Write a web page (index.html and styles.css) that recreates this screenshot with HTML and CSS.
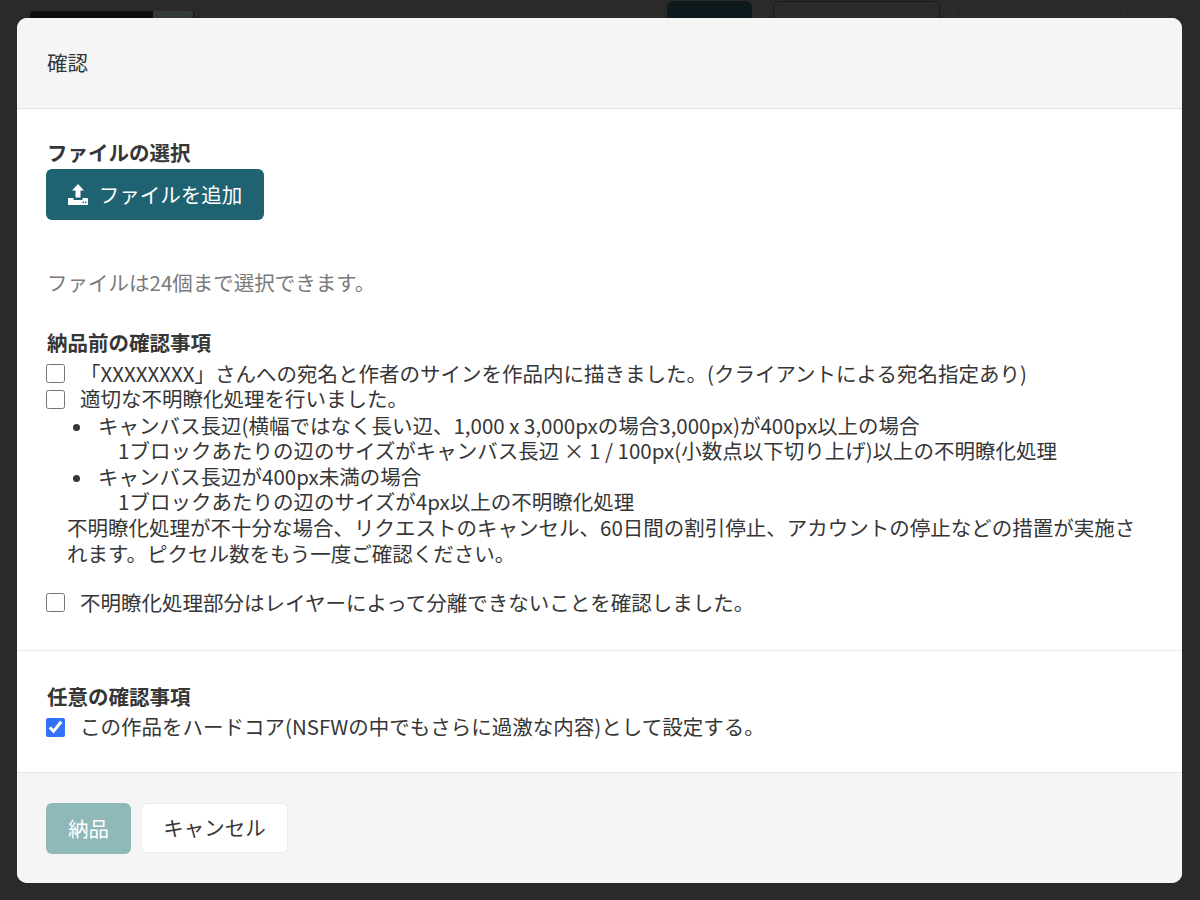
FILE: index.html
```html
<!DOCTYPE html>
<html lang="ja">
<head>
    <meta charset="UTF-8">
    <meta name="viewport" content="width=device-width, initial-scale=1.0">
    <title>確認</title>
    <link rel="stylesheet" href="styles.css">
</head>
<body>

    <!-- page behind the overlay -->
    <div class="backdrop">
        <div class="backdrop-thumb"><div class="backdrop-thumb-img"></div></div>
        <div class="backdrop-actions">
            <div class="backdrop-btn backdrop-btn-primary"></div>
            <div class="backdrop-btn backdrop-btn-outline"></div>
            <div class="backdrop-btn backdrop-btn-faint"></div>
        </div>
    </div>

    <div class="modal">
        <header class="modal-head">確認</header>

        <section class="modal-body">
            <div class="block-files">
                <div class="label">ファイルの選択</div>
                <button class="button button-primary" type="button">
                    <svg class="upload-icon" viewBox="0 0 20 21" width="20" height="21">
                        <path fill="#fff" d="M10 0 L16 6.5 H12.5 V13.5 H7.5 V6.5 H4 Z"/>
                        <path fill="#fff" d="M0 14 H5.5 V15.4 Q5.5 16 6.1 16 H13.9 Q14.5 16 14.5 15.4 V14 H18.8 Q20 14 20 15.2 V21 H0 Z"/>
                        <rect x="14.4" y="17.6" width="1.5" height="1.4" fill="#1f6272"/>
                        <rect x="16.9" y="17.6" width="1.5" height="1.4" fill="#1f6272"/>
                    </svg>
                    <span>ファイルを追加</span>
                </button>
                <p class="help">ファイルは24個まで選択できます。</p>
            </div>

            <div class="block-required">
                <div class="label label-spaced">納品前の確認事項</div>
                <label class="check"><input type="checkbox"><span class="check-text">「XXXXXXXX」さんへの宛名と作者のサインを作品内に描きました。(クライアントによる宛名指定あり)</span></label>
                <label class="check"><input type="checkbox"><span class="check-text">適切な不明瞭化処理を行いました。</span></label>
                <ul class="rules">
                    <li>キャンバス長辺(横幅ではなく長い辺、1,000 x 3,000pxの場合3,000px)が400px以上の場合
                        <div class="rule-detail">1ブロックあたりの辺のサイズがキャンバス長辺 × 1 / 100px(小数点以下切り上げ)以上の不明瞭化処理</div>
                    </li>
                    <li>キャンバス長辺が400px未満の場合
                        <div class="rule-detail">1ブロックあたりの辺のサイズが4px以上の不明瞭化処理</div>
                    </li>
                </ul>
                <p class="warning">不明瞭化処理が不十分な場合、リクエストのキャンセル、60日間の割引停止、アカウントの停止などの措置が実施されます。ピクセル数をもう一度ご確認ください。</p>
                <label class="check"><input type="checkbox"><span class="check-text">不明瞭化処理部分はレイヤーによって分離できないことを確認しました。</span></label>
            </div>

            <div class="block-optional">
                <div class="label label-spaced">任意の確認事項</div>
                <label class="check"><input type="checkbox" checked><span class="check-text">この作品をハードコア(NSFWの中でもさらに過激な内容)として設定する。</span></label>
            </div>
        </section>

        <footer class="modal-foot">
            <button class="button button-disabled" type="button">納品</button>
            <button class="button button-plain" type="button">キャンセル</button>
        </footer>
    </div>

</body>
</html>
```

FILE: styles.css
```css
* {
    margin: 0;
    padding: 0;
    box-sizing: border-box;
}
html, body {
    height: 100%;
}
body {
    background-color: #2b2a2a;
    color: #363636;
    font-family: "Noto Sans CJK JP", "Noto Sans", sans-serif;
    font-size: 20.5px;
    line-height: 25.6px;
    overflow: hidden;
}
.backdrop {
    display: flex;
    justify-content: space-between;
    padding: 1px 30px 0;
    height: 18px;
    overflow: hidden;
}
.backdrop-thumb {
    width: 164px;
    height: 30px;
    margin-top: 10px;
    border-radius: 4px;
    background-color: #0d0d0d;
    overflow: hidden;
}
.backdrop-thumb-img {
    width: 40px;
    height: 30px;
    margin-left: 123px;
    background-color: #333a39;
}
.backdrop-actions {
    display: flex;
    gap: 21px;
    margin-right: 45px;
}
.backdrop-btn {
    height: 40px;
    border-radius: 6px;
}
.backdrop-btn-primary {
    width: 85px;
    background-color: #0e1a1e;
}
.backdrop-btn-outline {
    width: 167px;
    border: 1px solid #141a1c;
}
.backdrop-btn-faint {
    width: 172px;
    margin-left: -8px;
    border: 1px solid #2f2f2f;
}
.modal {
    position: absolute;
    top: 18px;
    left: 17px;
    width: 1165px;
    height: 865px;
    display: flex;
    flex-direction: column;
    background-color: white;
    border-radius: 10px;
    overflow: hidden;
}
.modal-head {
    height: 91px;
    flex-shrink: 0;
    display: flex;
    align-items: center;
    padding: 0 30px;
    background-color: #f5f5f5;
    border-bottom: 1px solid #dfe1e2;
}
.modal-body {
    flex: 1;
    min-height: 0;
}
.label {
    font-weight: 700;
    padding-left: 1px;
}
.label-spaced {
    margin-bottom: 5px;
}
.block-files {
    padding: 31px 29px 0;
}
.button {
    font-family: inherit;
    font-size: 20.5px;
    line-height: 25.6px;
    height: 51px;
    border: 1px solid transparent;
    border-radius: 6px;
    display: inline-flex;
    align-items: center;
    justify-content: center;
}
.button-primary {
    margin-top: 3px;
    width: 218px;
    gap: 11px;
    padding-top: 1px;
    color: white;
    background-color: #1f6272;
}
.upload-icon {
    display: block;
}
.button-disabled {
    width: 85px;
    color: white;
    background-color: #8fb9b9;
}
.button-plain {
    width: 147px;
    height: 50px;
    color: #363636;
    background-color: white;
    border-color: #ececec;
}
.help {
    margin-top: 50px;
    padding-left: 1px;
    color: #7a7a7a;
}
.block-required {
    padding: 35px 30px 34px 29px;
    border-bottom: 1px solid #e3edef;
}
.check {
    display: flex;
    align-items: center;
    min-height: 25.6px;
}
.check input {
    width: 19px;
    height: 19px;
    margin: 0;
    flex-shrink: 0;
    accent-color: #3273f6;
}
.check-text {
    margin-left: 15px;
}
.rules {
    padding-left: 52px;
    padding-top: 0.6px;
    list-style: none;
}
.rules li::before {
    content: "";
    display: inline-block;
    width: 7px;
    height: 7px;
    margin: 0 18px 3px -25px;
    border-radius: 50%;
    background-color: #363636;
}
.rule-detail {
    padding-left: 20px;
}
.warning {
    margin: 0 0 24px 21px;
}
.block-optional {
    padding: 33px 30px 0 29px;
}
.modal-foot {
    height: 111px;
    flex-shrink: 0;
    display: flex;
    align-items: flex-start;
    gap: 10px;
    padding: 30px 29px 0;
    background-color: #f5f5f5;
    border-top: 1px solid #e6e6e6;
}
```
